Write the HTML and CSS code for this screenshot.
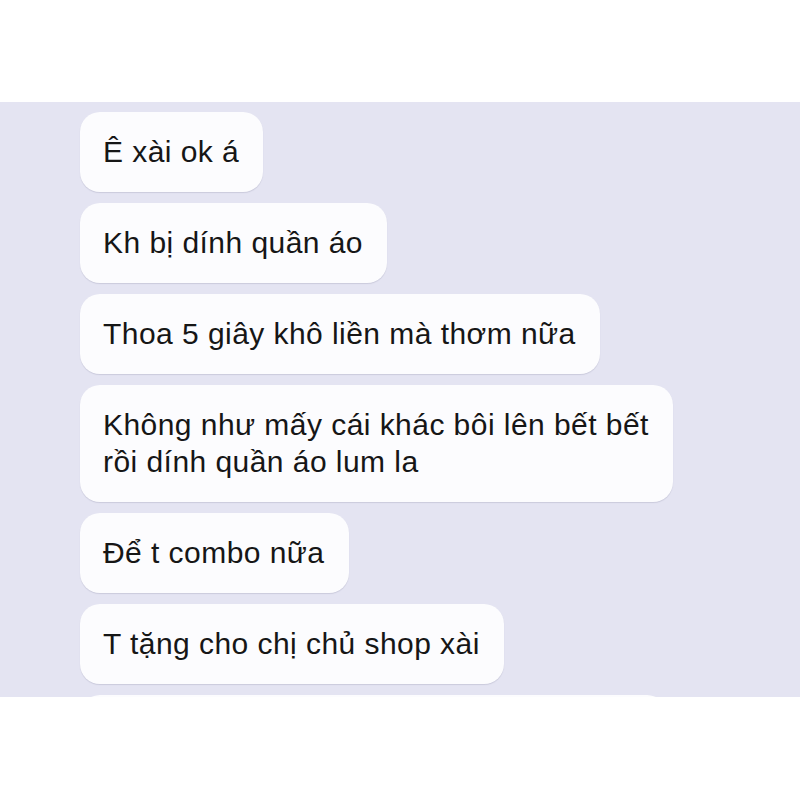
FILE: index.html
```html
<!DOCTYPE html>
<html lang="vi">
<head>
<meta charset="utf-8">
<title>Tin nhắn</title>
<link rel="stylesheet" href="styles.css">
</head>
<body>
<div class="top"></div>
<section class="chat">
  <div class="bubble">Ê xài ok á</div>
  <div class="bubble">Kh bị dính quần áo</div>
  <div class="bubble">Thoa 5 giây khô liền mà thơm nữa</div>
  <div class="bubble">Không như mấy cái khác bôi lên bết bết<br>rồi dính quần áo lum la</div>
  <div class="bubble">Để t combo nữa</div>
  <div class="bubble">T tặng cho chị chủ shop xài</div>
  <div class="bubble bubble-next">&nbsp;</div>
</section>
<div class="bottom"></div>
</body>
</html>
```

FILE: styles.css
```css
html, body {
  margin: 0;
  padding: 0;
  background: #ffffff;
}

body {
  font-family: "Liberation Sans", Arial, Helvetica, sans-serif;
  color: #161616;
}

.top {
  height: 102px;
}

.chat {
  height: 595px;
  overflow: hidden;
  background: #e4e4f2;
  box-sizing: border-box;
  padding: 10px 0 0 80px;
  display: flex;
  flex-direction: column;
  align-items: flex-start;
  gap: 11px;
}

.bubble {
  flex: none;
  background: #fcfcfe;
  border-radius: 20px;
  padding: 21px 24px 22px 23px;
  font-size: 30px;
  letter-spacing: 0.45px;
  line-height: 37px;
  white-space: nowrap;
  box-shadow: 0 1px 1px rgba(90, 90, 120, 0.18);
}

.bubble-next {
  width: 540px;
}

.bottom {
  height: 103px;
}
```
